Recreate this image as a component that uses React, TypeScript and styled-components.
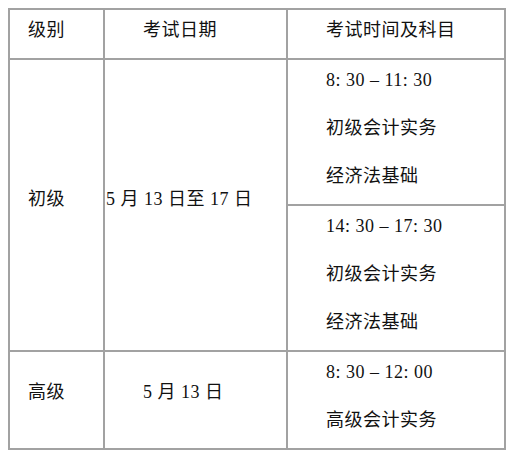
import styled, { createGlobalStyle } from 'styled-components';

const GlobalStyle = createGlobalStyle`
  body {
    margin: 8px;
    background: #ffffff;
    font-family: "Liberation Serif", "Noto Sans CJK SC", serif;
    color: #111111;
  }
`;

const Table = styled.table`
  border-collapse: separate;
  border-spacing: 0;
  table-layout: fixed;
  width: 498px;
  border-top: 2px solid #a2a2a2;
  border-left: 2px solid #a2a2a2;
  font-size: 18px;
  letter-spacing: 0.5px;
`;

const Row = styled.tr<{ h: number }>`
  height: ${({ h }) => `${h}px`};
`;

const Cell = styled.td<{ pl: number; lift?: number }>`
  box-sizing: border-box;
  border-right: 2px solid #a2a2a2;
  border-bottom: 2px solid #a2a2a2;
  padding: 0 0 ${({ lift = 10 }) => `${lift}px`} ${({ pl }) => `${pl}px`};
  vertical-align: middle;
  white-space: nowrap;
  line-height: 24px;
`;

const ListCell = styled.td`
  box-sizing: border-box;
  border-right: 2px solid #a2a2a2;
  border-bottom: 2px solid #a2a2a2;
  padding: 0 0 0 38px;
  vertical-align: top;
  white-space: nowrap;
`;

const Line = styled.div`
  height: 48px;
  line-height: 40px;
`;

const sessions = [
  { time: '8: 30 – 11: 30', subjects: ['初级会计实务', '经济法基础'] },
  { time: '14: 30 – 17: 30', subjects: ['初级会计实务', '经济法基础'] },
];

const Session = ({ time, subjects }: { time: string; subjects: string[] }) => (
  <ListCell>
    <Line>{time}</Line>
    {subjects.map((s) => (
      <Line key={s}>{s}</Line>
    ))}
  </ListCell>
);

export default function App() {
  return (
    <>
      <GlobalStyle />
      <Table>
        <colgroup>
          <col style={{ width: 95 }} />
          <col style={{ width: 183 }} />
          <col style={{ width: 218 }} />
        </colgroup>
        <tbody>
          <Row h={50}>
            <Cell pl={18} lift={8}>级别</Cell>
            <Cell pl={38} lift={8}>考试日期</Cell>
            <Cell pl={38} lift={8}>考试时间及科目</Cell>
          </Row>
          <Row h={146}>
            <Cell pl={18} rowSpan={2} lift={12}>初级</Cell>
            <Cell pl={1} rowSpan={2} lift={12}>5 月 13 日至 17 日</Cell>
            <Session {...sessions[0]} />
          </Row>
          <Row h={146}>
            <Session {...sessions[1]} />
          </Row>
          <Row h={97}>
            <Cell pl={18} lift={16}>高级</Cell>
            <Cell pl={38} lift={16}>5 月 13 日</Cell>
            <Session time="8: 30 – 12: 00" subjects={['高级会计实务']} />
          </Row>
        </tbody>
      </Table>
    </>
  );
}
